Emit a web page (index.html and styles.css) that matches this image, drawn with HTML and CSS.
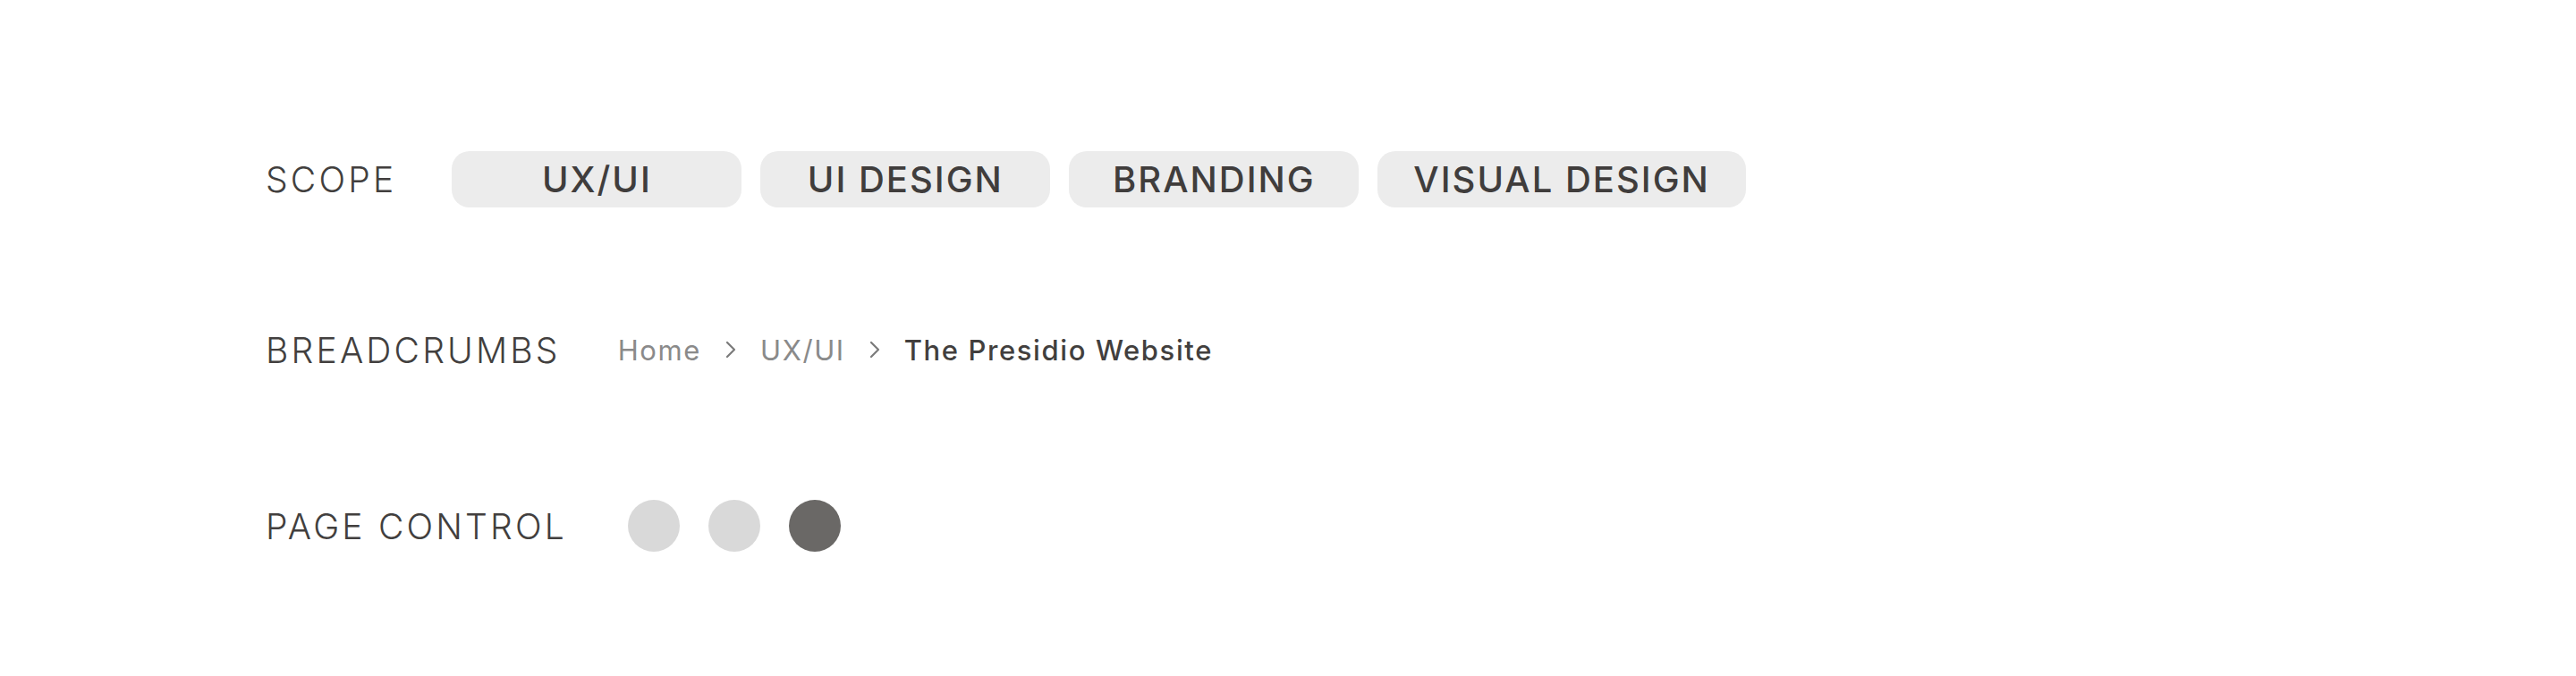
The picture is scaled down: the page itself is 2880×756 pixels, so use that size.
FILE: index.html
```html
<!DOCTYPE html>
<html lang="en">
<head>
<meta charset="utf-8">
<title>Components</title>
<link rel="stylesheet" href="styles.css">
</head>
<body>
<main class="sheet">
  <section class="row">
    <span class="label">SCOPE</span>
    <ul class="chips">
      <li class="chip">UX/UI</li>
      <li class="chip">UI DESIGN</li>
      <li class="chip">BRANDING</li>
      <li class="chip">VISUAL DESIGN</li>
    </ul>
  </section>
  <section class="row row-crumbs">
    <span class="label">BREADCRUMBS</span>
    <nav class="crumbs">
      <a class="crumb">Home</a>
      <svg class="chev" width="14" height="20" viewBox="0 0 14 20"><polyline points="3,2 11,10 3,18" fill="none" stroke="#7a7a7a" stroke-width="2.2" stroke-linecap="round" stroke-linejoin="round"/></svg>
      <a class="crumb">UX/UI</a>
      <svg class="chev" width="14" height="20" viewBox="0 0 14 20"><polyline points="3,2 11,10 3,18" fill="none" stroke="#7a7a7a" stroke-width="2.2" stroke-linecap="round" stroke-linejoin="round"/></svg>
      <span class="crumb current">The Presidio Website</span>
    </nav>
  </section>
  <section class="row">
    <span class="label">PAGE CONTROL</span>
    <div class="dots">
      <span class="dot"></span>
      <span class="dot"></span>
      <span class="dot active"></span>
    </div>
  </section>
</main>
</body>
</html>
```

FILE: styles.css
```css
html, body {
  margin: 0;
  padding: 0;
  background: #ffffff;
}
body {
  font-family: Inter, "Noto Sans", sans-serif;
  color: #423f3e;
}
.sheet {
  display: flex;
  flex-direction: column;
  gap: 130px;
  padding: 168px 0 0 297px;
}
.row {
  display: flex;
  align-items: center;
  gap: 62px;
  height: 64px;
}
.row-crumbs {
  margin: -3px 0 3px;
}
.label {
  font-size: 39px;
  font-weight: 300;
  letter-spacing: 3.2px;
  color: #423f3e;
  white-space: nowrap;
}
.chips {
  display: flex;
  gap: 21px;
  list-style: none;
  margin: 0;
  padding: 0;
}
.chip {
  box-sizing: border-box;
  min-width: 324px;
  height: 63px;
  padding: 0 40px;
  border-radius: 20px;
  background: #ececec;
  display: flex;
  align-items: center;
  justify-content: center;
  font-size: 40px;
  font-weight: 500;
  letter-spacing: 2px;
  color: #403d3c;
  white-space: nowrap;
}
.crumbs {
  display: flex;
  align-items: center;
  gap: 26px;
  margin-left: 2px;
}
.crumb {
  font-size: 31px;
  font-weight: 400;
  letter-spacing: 1.6px;
  color: #8a8a8a;
  white-space: nowrap;
}
.crumb.current {
  font-weight: 500;
  color: #423f3e;
}
.chev {
  display: block;
}
.dots {
  display: flex;
  gap: 32px;
  margin-left: 6px;
}
.dot {
  width: 58px;
  height: 58px;
  border-radius: 50%;
  background: #d9d9d9;
}
.dot.active {
  background: #6a6866;
}
```
